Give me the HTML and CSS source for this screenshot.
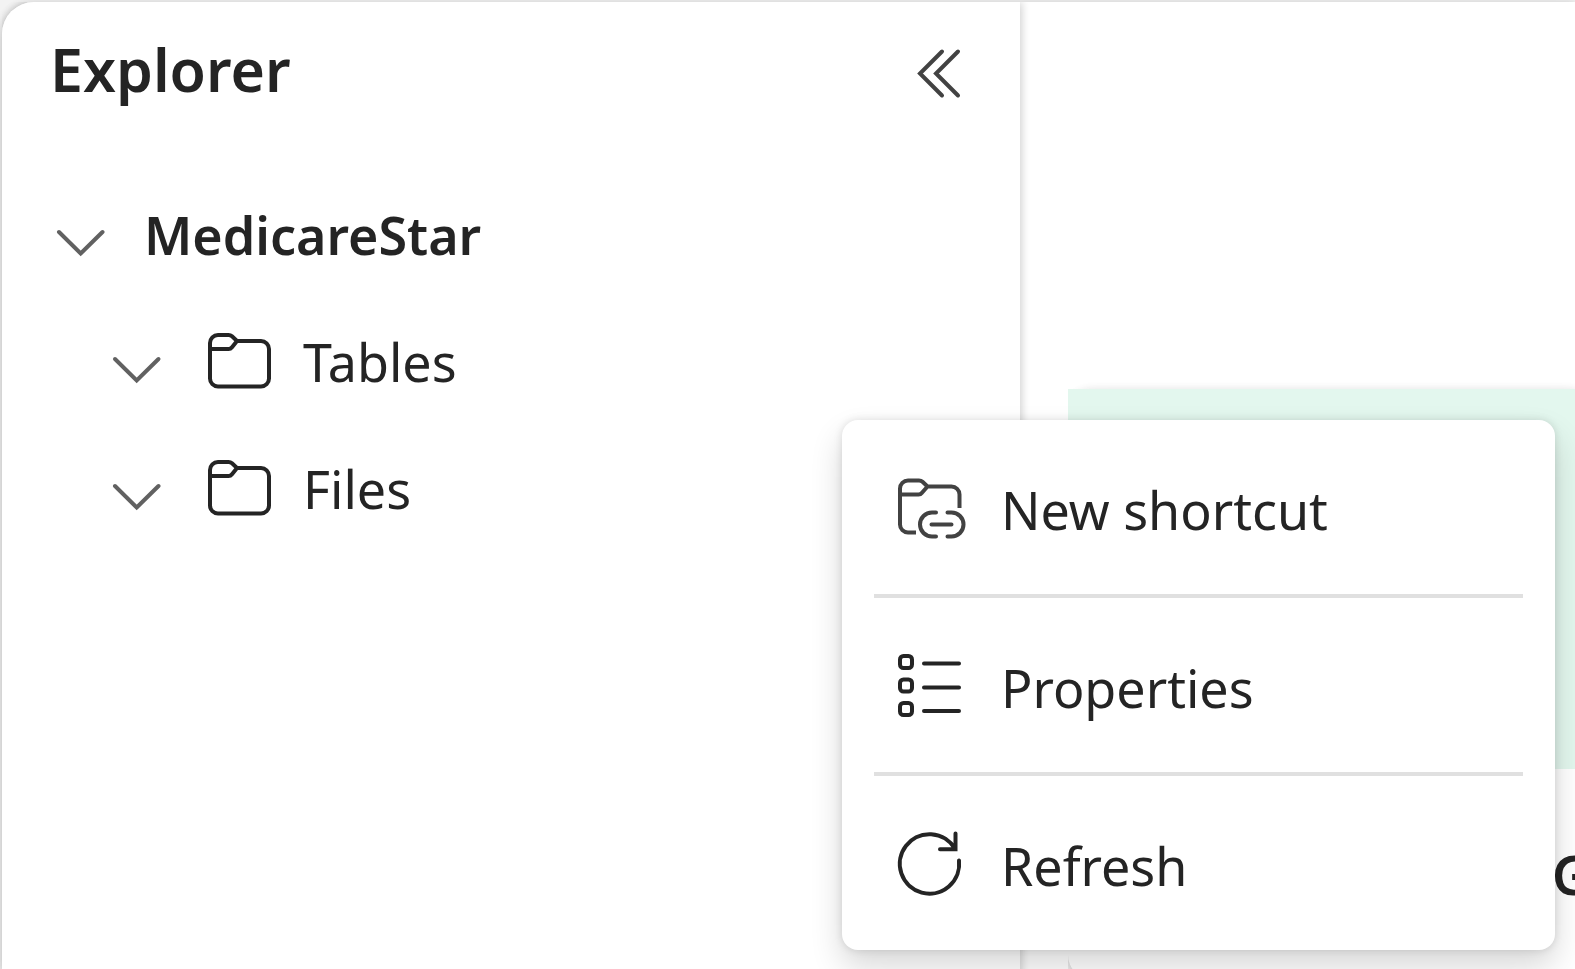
FILE: index.html
```html
<!DOCTYPE html>
<html lang="en">
<head>
<meta charset="utf-8">
<title>Explorer</title>
<link rel="stylesheet" href="styles.css">
</head>
<body>
<div class="workspace">
  <aside class="explorer">
    <header class="explorer-header">
      <h1 class="explorer-title">Explorer</h1>
      <button class="icon-button" type="button" aria-label="Collapse explorer">
        <svg class="icon-collapse" viewBox="0 0 48 48" aria-hidden="true"><path d="M27 2.500 5 24.500 27 46.500M43 2.500 21 24.500 43 46.500"/></svg>
      </button>
    </header>
    <ul class="tree">
      <li class="tree-row tree-root">
        <button class="icon-button" type="button" aria-label="Toggle MedicareStar">
          <svg class="icon-chevron" viewBox="0 0 48 48" aria-hidden="true"><path d="M3 21 24.700 42.500 46.500 21"/></svg>
        </button>
        <span class="tree-label">MedicareStar</span>
      </li>
      <li class="tree-row tree-child">
        <button class="icon-button" type="button" aria-label="Toggle Tables">
          <svg class="icon-chevron" viewBox="0 0 48 48" aria-hidden="true"><path d="M3 21 24.700 42.500 46.500 21"/></svg>
        </button>
        <svg class="icon" viewBox="0 0 64 64" aria-hidden="true"><path d="M2 13a8 8 0 0 1 8-8h10.500c1.500 0 2.500.4 3.500 1.300l5 4.700h24a8 8 0 0 1 8 8V48.500a8 8 0 0 1-8 8H10a8 8 0 0 1-8-8ZM2 19h18.500c1.500 0 2.500-.5 3.500-1.800l5-6.200"/></svg>
        <span class="tree-label">Tables</span>
      </li>
      <li class="tree-row tree-child">
        <button class="icon-button" type="button" aria-label="Toggle Files">
          <svg class="icon-chevron" viewBox="0 0 48 48" aria-hidden="true"><path d="M3 21 24.700 42.500 46.500 21"/></svg>
        </button>
        <svg class="icon" viewBox="0 0 64 64" aria-hidden="true"><path d="M2 13a8 8 0 0 1 8-8h10.500c1.500 0 2.500.4 3.500 1.300l5 4.700h24a8 8 0 0 1 8 8V48.500a8 8 0 0 1-8 8H10a8 8 0 0 1-8-8ZM2 19h18.500c1.500 0 2.500-.5 3.500-1.800l5-6.200"/></svg>
        <span class="tree-label">Files</span>
      </li>
    </ul>
  </aside>
  <main class="content">
    <section class="card">
      <div class="card-banner"></div>
      <h2 class="card-title">G</h2>
    </section>
  </main>
</div>
<div class="menu" role="menu">
  <button class="menu-item" type="button" role="menuitem">
    <svg class="icon icon-muted" viewBox="0 0 64 64" aria-hidden="true"><path class="cut" d="M62.500 33V19.500a8 8 0 0 0-8-8H30.500l-5-4.700c-1-.9-2-1.300-3.500-1.300h-11a8 8 0 0 0-8 8v36a8 8 0 0 0 8 8H19M3 19.500h18.500c1.500 0 2.500-.5 3.500-1.800l5.500-6.200"/><path d="M39 37.500h-4a12 12 0 0 0 0 24h4M50.500 37.500h4a12 12 0 0 1 0 24h-4M34.500 49.500h20"/></svg>
    <span class="menu-label">New shortcut</span>
  </button>
  <hr class="menu-divider">
  <button class="menu-item" type="button" role="menuitem">
    <svg class="icon" viewBox="0 0 64 64" aria-hidden="true"><rect x="3" y="3" width="12" height="12" rx="3.500"/><rect x="3" y="26.500" width="12" height="12" rx="3.500"/><rect x="3" y="50" width="12" height="12" rx="3.500"/><path d="M27 10.500h35M27 34.500h35M27 58h35"/></svg>
    <span class="menu-label">Properties</span>
  </button>
  <hr class="menu-divider">
  <button class="menu-item" type="button" role="menuitem">
    <svg class="icon" viewBox="0 0 64 64" aria-hidden="true"><path d="M62 29.500A29.700 29.700 0 1 1 58 17.700M58.500 2.500v15.700H43"/></svg>
    <span class="menu-label">Refresh</span>
  </button>
</div>
</body>
</html>
```
FILE: styles.css
```css
* {
  box-sizing: border-box;
}

body {
  position: relative;
  height: 100vh;
  margin: 0;
  padding: 2px 0 0 2px;
  overflow: hidden;
  background: #f3f3f3;
  color: #242424;
  font-family: "Segoe UI", "Noto Sans", sans-serif;
  font-size: 52px;
  line-height: 72px;
}

button {
  margin: 0;
  padding: 0;
  border: 0;
  background: none;
  color: inherit;
  font: inherit;
}

svg {
  display: block;
  flex: none;
  overflow: visible;
  fill: none;
  stroke: currentColor;
  stroke-width: 4;
  stroke-linecap: round;
}

.workspace {
  display: grid;
  grid-template-columns: 1018fr 555fr;
  height: 100%;
  border-top-left-radius: 32px;
  background: #fff;
  box-shadow: 0 0 8px rgba(0, 0, 0, 0.12), 0 8px 16px rgba(0, 0, 0, 0.14);
}

.explorer {
  z-index: 1;
  border-top-left-radius: 32px;
  background: #fff;
  box-shadow: 2px 0 8px rgba(0, 0, 0, 0.18);
  clip-path: inset(0 -16px 0 0);
}

.explorer-header {
  display: flex;
  align-items: center;
  justify-content: space-between;
  height: 142px;
  padding: 0 57px 0 48px;
}

.explorer-title {
  margin: 0;
  padding-bottom: 8px;
  font-size: 59px;
  font-weight: 600;
}

.icon-button {
  flex: none;
}

.icon-collapse {
  width: 48px;
  height: 48px;
  color: #424242;
}

.icon-chevron {
  width: 48px;
  height: 48px;
  color: #616161;
}

.icon {
  width: 64px;
  height: 64px;
}

.icon-muted {
  color: #424242;
}

.cut {
  stroke-linecap: butt;
}

.tree {
  margin: 0;
  padding: 27px 0 0;
  list-style: none;
}

.tree-row {
  display: flex;
  align-items: center;
  height: 127px;
}

.tree-root {
  gap: 40px;
  padding-left: 54px;
  font-weight: 600;
}

.tree-child {
  gap: 48px;
  padding-left: 110px;
}

.tree-child .icon + .tree-label {
  margin-left: -17px;
}

.content {
  min-width: 0;
  padding: 387px 0 0 48px;
}

.card {
  margin-right: -16px;
  border-radius: 24px;
  background: #fff;
  box-shadow: 0 0 8px rgba(0, 0, 0, 0.08), 0 8px 16px rgba(0, 0, 0, 0.14);
  clip-path: inset(-40px 0 -40px 0);
}

.card-banner {
  height: 380px;
  background: #e3f7ee;
}

.card-title {
  margin: 0;
  padding: 69px 0;
  font-size: 54px;
  font-weight: 600;
  text-align: right;
}

.menu {
  position: absolute;
  z-index: 2;
  top: 420px;
  right: 20px;
  width: 713px;
  border-radius: 16px;
  background: #fff;
  box-shadow: 0 0 8px rgba(0, 0, 0, 0.12), 0 16px 32px rgba(0, 0, 0, 0.16);
}

.menu-item {
  display: flex;
  align-items: center;
  gap: 40px;
  width: 100%;
  height: 174px;
  padding: 0 55px;
  text-align: left;
}

.menu-label {
  padding-top: 6px;
}

.menu-divider {
  height: 4px;
  margin: 0 32px;
  border: 0;
  background: #e0e0e0;
}
```
